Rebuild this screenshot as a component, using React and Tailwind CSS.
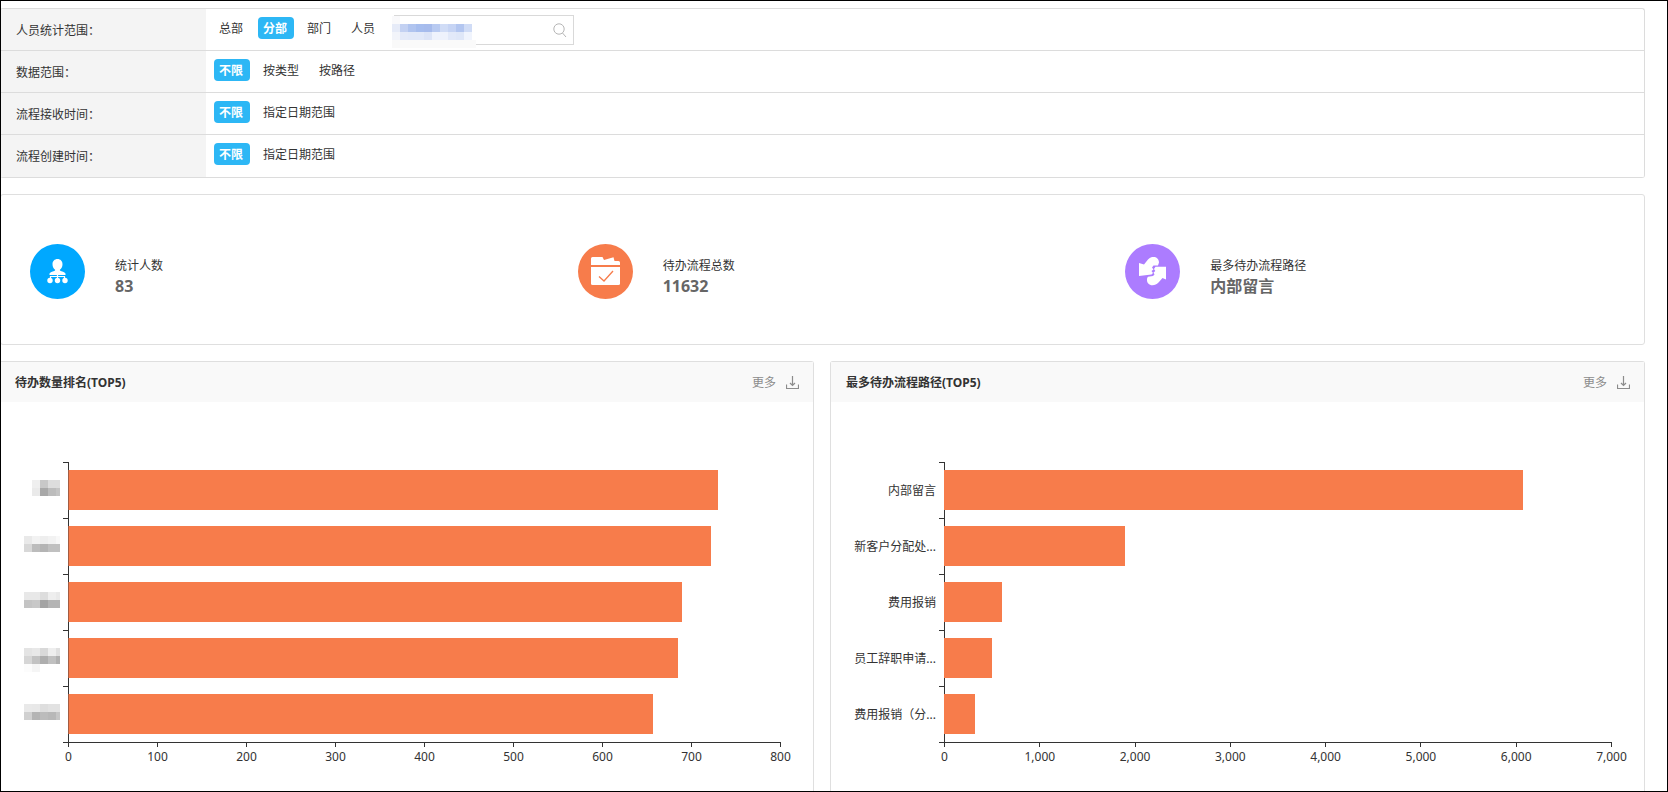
import { useState } from "react";
import clsx from "clsx";

const FILTERS = [
  { key: "people", label: "人员统计范围：", options: ["总部", "分部", "部门", "人员"], initial: "分部", search: true },
  { key: "data", label: "数据范围：", options: ["不限", "按类型", "按路径"], initial: "不限" },
  { key: "received", label: "流程接收时间：", options: ["不限", "指定日期范围"], initial: "不限" },
  { key: "created", label: "流程创建时间：", options: ["不限", "指定日期范围"], initial: "不限" },
];

const RANKING = {
  max: 800,
  ticks: ["0", "100", "200", "300", "400", "500", "600", "700", "800"],
  rows: [
    { value: 730, mask: [["#ffffff", "#efefef", "#c8c8c8", "#dddddd", "#dddddd"], ["#ffffff", "#eaeaea", "#a8a8a8", "#bcbcbc", "#c4c4c4"]] },
    { value: 722, mask: [["#e9e9e9", "#f2f2f2", "#eeeeee", "#f2f2f2", "#f8f8f8"], ["#d8d8d8", "#bcbcbc", "#b4b4b4", "#c0c0c0", "#c0c0c0"]] },
    { value: 690, mask: [["#e8e8e8", "#e8e8e8", "#dddddd", "#eeeeee", "#e9e9e9"], ["#c4c4c4", "#c8c8c8", "#a4a4a4", "#b4b4b4", "#b4b4b4"]] },
    { value: 685, mask: [["#e4e4e4", "#e8e8e8", "#d9d9d9", "#eeeeee", "#e0e0e0"], ["#d6d6d6", "#c2c2c2", "#aeaeae", "#c0c0c0", "#b0b0b0"], ["#fcfcfc", "#f5f5f5", "#ffffff", "#ffffff", "#ffffff"]] },
    { value: 657, mask: [["#e9e9e9", "#e8e8e8", "#dedede", "#e2e2e2", "#e2e2e2"], ["#d0d0d0", "#b4b4b4", "#bcbcbc", "#b8b8b8", "#c6c6c6"]] },
  ],
};

const PATHS = {
  max: 7000,
  ticks: ["0", "1,000", "2,000", "3,000", "4,000", "5,000", "6,000", "7,000"],
  rows: [
    { value: 6075, name: "内部留言" },
    { value: 1903, name: "新客户分配处..." },
    { value: 605, name: "费用报销" },
    { value: 500, name: "员工辞职申请..." },
    { value: 325, name: "费用报销（分..." },
  ],
};

const SEARCH_MASK = [
  ["#f9f9fb", "#ffffff", "#ffffff", "#ffffff", "#ffffff", "#ffffff", "#ffffff", "#ffffff", "#ffffff", "#ffffff", "#ffffff"],
  ["#e6ebf8", "#c3d1f2", "#b0c4ef", "#a6bdee", "#a6bbec", "#b8caf1", "#d0dcf6", "#c6d4f4", "#b3c6f0", "#d0dcf6", "#ffffff"],
  ["#f2f4fa", "#e4eaf9", "#e2e9f9", "#e2e9f9", "#dce4f7", "#eef2fc", "#eef2fc", "#e2e9f9", "#dfe7f8", "#f0f4fd", "#ffffff"],
  ["#f9f9f9", "#fafafa", "#fafafa", "#fafafa", "#fafafa", "#fafafa", "#fafafa", "#fafafa", "#fafafa", "#fafafa", "#fafafa"],
];

const PeopleIcon = () => (
  <svg viewBox="0 0 55 55" className="size-[55px]" aria-hidden="true">
    <circle cx="27.5" cy="27.5" r="27.5" fill="#00a8ff" />
    <g fill="#fff">
      <path d="M27.5 15c2.9 0 5 2.2 5 5.2 0 2.3-1 4.400-2.600 5.500v.800c2 1.200 4.600 1.400 5.600 3v1.500H19.500v-1.500c1-1.600 3.600-1.800 5.600-3v-.800c-1.600-1.100-2.600-3.200-2.600-5.500 0-3 2.100-5.200 5-5.200z" />
      <circle cx="20" cy="36.500" r="2.700" />
      <circle cx="27.5" cy="36.500" r="2.700" />
      <circle cx="35" cy="36.500" r="2.700" />
    </g>
    <path d="M20.500 35v-2.500h14V35M27.500 31v4" fill="none" stroke="#fff" strokeWidth="1.2" />
  </svg>
);

const FolderIcon = () => (
  <svg viewBox="0 0 55 55" className="size-[55px]" aria-hidden="true">
    <circle cx="27.5" cy="27.5" r="27.5" fill="#f77c4b" />
    <path d="M13 21V14.500q0-1.500 1.500-1.500H24.500l1.500 3 9.500-2.700 1 3.700h4q1.500 0 1.500 1.500V21z" fill="#fff" />
    <path d="M13 23h29v16.500q0 1.500-1.500 1.500h-26q-1.500 0-1.500-1.500z" fill="#fff" />
    <path d="M21 32.500l5 4.500 9-10" fill="none" stroke="#f77c4b" strokeWidth="1.3" />
  </svg>
);

const PathIcon = () => (
  <svg viewBox="0 0 55 55" className="size-[55px]" aria-hidden="true">
    <circle cx="27.5" cy="27.5" r="27.5" fill="#ac7cff" />
    <g fill="#fff">
      <path d="M14 19l5 1.500 4-5c2-2 3.500-2.500 5.500-2.500 3 0 5.500 2 5.500 5.500l-1 3h-4.500l-1.500 2 1.500 2-2 1.500 1.500 2-1.500 1.500L14 32z" />
      <path d="M41 35.500l-3.500-1.500-4 4.500c-2 2-3.500 2.700-6 2.700-3.500 0-5.800-2.500-5.500-6 .1-1.200.5-1.700 1-2.500l5-.7 1.500-1.500-1-2 1.800-1.500-1.300-2 1.500-2.300H41z" />
    </g>
  </svg>
);

const DownloadIcon = () => (
  <svg viewBox="0 0 13 13" className="size-[13px]" fill="none" stroke="#8c8c8c" strokeWidth="1.2" aria-hidden="true">
    <path d="M6.5 0v9.500M4 7l2.500 2.500L9 7M.5 8.500v4h12v-4" />
  </svg>
);

// Redacted value, drawn as a grid of coloured cells
const Mosaic = ({ cells, className }) => (
  <div className={className} aria-hidden="true">
    {cells.map((row, i) => (
      <div key={i} className="flex">
        {row.map((color, j) => (
          <span key={j} className="h-2 w-2 last:w-1" style={{ backgroundColor: color }} />
        ))}
      </div>
    ))}
  </div>
);

const FilterRow = ({ filter }) => {
  const [selected, setSelected] = useState(filter.initial);

  return (
    <div className="flex h-[42px] border-b border-[#dcdcdc] last:h-[43px]">
      <div className="w-[205px] shrink-0 bg-[#f4f4f4] pl-[15px] leading-[44px]">{filter.label}</div>
      <div className="flex items-start gap-2 pl-2" role="group" aria-label={filter.label}>
        {filter.options.map((option) => (
          <button
            key={option}
            type="button"
            aria-pressed={selected === option}
            onClick={() => setSelected(option)}
            className={clsx(
              "mt-2 h-[22px] rounded pt-[2px] pr-[7px] pl-[5px] leading-5",
              selected === option && "bg-[#2db7f5] font-bold text-white"
            )}
          >
            {option}
          </button>
        ))}
        {filter.search && (
          <div className="relative ml-1 mt-[6px] flex h-[30px] w-[180px] items-center border border-[#d9d9d9]">
            <input type="text" aria-label="分部" className="min-w-0 flex-1 bg-transparent px-2 outline-none" />
            <button type="button" aria-label="搜索" className="mr-[6px]">
              <svg viewBox="0 0 14 14" className="size-[14px]" fill="none" stroke="#b5b5b5" aria-hidden="true">
                <circle cx="6" cy="6" r="5.2" />
                <path d="M9.500 10l3.500 4" />
              </svg>
            </button>
            <Mosaic cells={SEARCH_MASK} className="absolute top-0 -left-[3px]" />
          </div>
        )}
      </div>
    </div>
  );
};

const Stat = ({ icon, label, value }) => (
  <div className="flex items-center gap-[30px] pt-1 pl-[29px]">
    {icon}
    <div className="pt-2">
      <p className="leading-5">{label}</p>
      <p className="text-base leading-5 font-bold text-[#666]">{value}</p>
    </div>
  </div>
);

const BarChart = ({ chart, gutter, edge }) => (
  <div className="pt-[60px] pr-8">
    {chart.rows.map((row) => (
      <div key={row.value} className="flex h-14">
        <div className={clsx("flex shrink-0", gutter)}>
          <div className="flex-1 pr-[3px] text-right leading-[57px]">
            {row.name}
            {row.mask && <Mosaic cells={row.mask} className="flex flex-col items-end pt-[18px]" />}
          </div>
          <div className="h-px w-[5px] bg-[#333]" />
        </div>
        <div className="flex-1 border-l border-[#333] py-2">
          <div
            className={clsx("-ml-px h-10 border-l bg-[#f77c4b]", edge)}
            style={{ width: `${(row.value / chart.max) * 100}%` }}
          />
        </div>
      </div>
    ))}
    <div className="flex">
      <div className={clsx("flex shrink-0 justify-end", gutter)}>
        <div className="h-px w-[5px] bg-[#333]" />
      </div>
      <div className="flex flex-1 justify-between border-t border-[#333]">
        {chart.ticks.map((tick) => (
          <div key={tick} className="flex w-px flex-col items-center whitespace-nowrap">
            <span className="h-1 w-px bg-[#333]" />
            <span className="leading-5">{tick}</span>
          </div>
        ))}
      </div>
    </div>
  </div>
);

const Panel = ({ title, children }) => (
  <section className="rounded-t-[3px] border border-b-0 border-[#dfdfdf]">
    <header className="flex h-10 items-center bg-[#f9f9f9] pr-[14px] pl-[15px]">
      <h2 className="flex-1 pt-[2px] font-bold">{title}</h2>
      <button type="button" className="mr-[10px] pt-[2px] text-[#8c8c8c]">更多</button>
      <button type="button" aria-label="下载">
        <DownloadIcon />
      </button>
    </header>
    {children}
  </section>
);

const App = () => {
  return (
    <div className="relative flex min-h-screen flex-col gap-4 overflow-hidden bg-white pt-2 pr-[23px] font-['Noto_Sans','Noto_Sans_CJK_SC',sans-serif] text-xs text-[#333]">
      {/* Filters */}
      <section className="overflow-hidden rounded-[3px] border border-b-0 border-[#dcdcdc]">
        {FILTERS.map((filter) => (
          <FilterRow key={filter.key} filter={filter} />
        ))}
      </section>

      {/* Stats */}
      <section className="grid h-[151px] grid-cols-3 items-center rounded-[3px] border border-[#dfdfdf]">
        <Stat icon={<PeopleIcon />} label="统计人数" value="83" />
        <Stat icon={<FolderIcon />} label="待办流程总数" value="11632" />
        <Stat icon={<PathIcon />} label="最多待办流程路径" value="内部留言" />
      </section>

      {/* Charts */}
      <div className="-ml-px grid flex-1 grid-cols-2 gap-4">
        <Panel title="待办数量排名(TOP5)">
          <BarChart chart={RANKING} gutter="w-[68px]" edge="border-[#a35c42]" />
        </Panel>
        <Panel title="最多待办流程路径(TOP5)">
          <BarChart chart={PATHS} gutter="w-[113px]" edge="border-[#f77c4b]" />
        </Panel>
      </div>

      <div className="pointer-events-none absolute inset-0 border border-black" />
    </div>
  );
};

export default App;
